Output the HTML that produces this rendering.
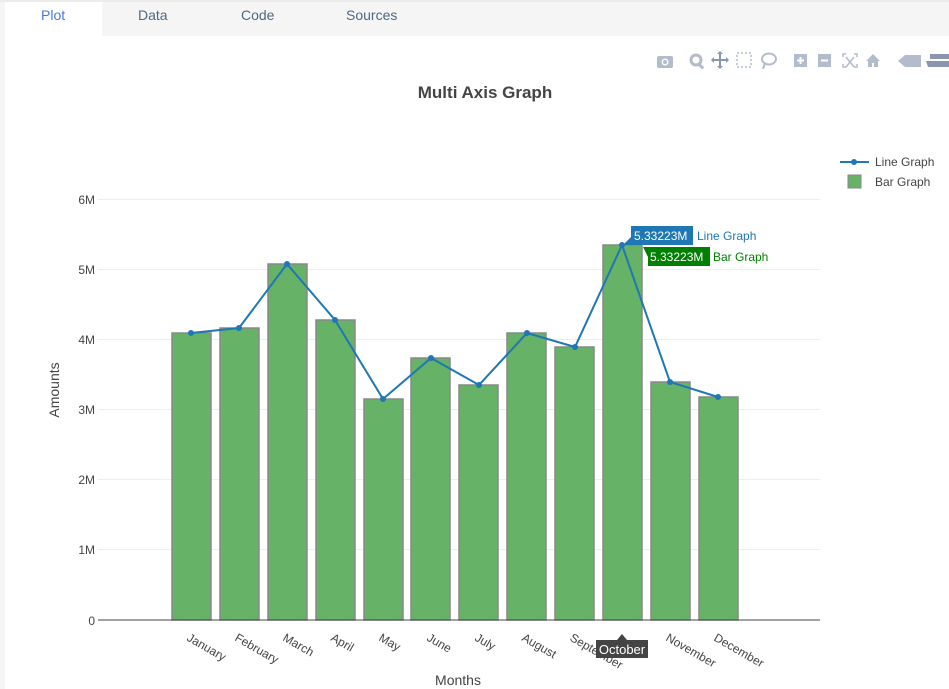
<!DOCTYPE html>
<html><head><meta charset="utf-8"><style>
body{margin:0;width:949px;height:689px;overflow:hidden;background:#fff;font-family:"Liberation Sans",sans-serif}
svg{position:absolute;left:0;top:0}
</style></head><body>
<svg width="949" height="689" viewBox="0 0 949 689" font-family="Liberation Sans, sans-serif">
<rect x="0" y="0" width="949" height="36" fill="#f5f5f5"/>
<rect x="0" y="0" width="5" height="689" fill="#f5f5f5"/>
<rect x="5" y="0" width="97" height="36" fill="#fff"/>
<rect x="0" y="0" width="949" height="2" fill="#ececec"/>
<g font-size="14">
<text x="41" y="20" fill="#447adb">Plot</text>
<text x="138" y="20" fill="#506784">Data</text>
<text x="241" y="20" fill="#506784">Code</text>
<text x="346" y="20" fill="#506784">Sources</text>
</g>
<!-- modebar -->
<g fill="#b3bccd">
<rect x="657" y="56" width="16" height="12" rx="2"/><circle cx="665" cy="62" r="3.5" fill="#fff"/><circle cx="665" cy="62" r="2"/>
<circle cx="696" cy="60" r="5" fill="none" stroke="#b3bccd" stroke-width="3"/><rect x="699" y="63" width="3" height="7" transform="rotate(-45 700 66)"/>
<path d="M720 52v16M712 60h16" stroke="#8a96ad" stroke-width="2"/><path d="M720 51l-3 3h6zM720 69l-3-3h6zM711 60l3-3v6zM729 60l-3-3v6z" fill="#8a96ad"/>
<rect x="737" y="53" width="14" height="14" fill="none" stroke="#b3bccd" stroke-width="1.5" stroke-dasharray="2 2"/>
<ellipse cx="769" cy="59" rx="7" ry="5.5" fill="none" stroke="#b3bccd" stroke-width="2"/><path d="M765 63l-2 6" stroke="#b3bccd" stroke-width="2"/>
<rect x="794" y="54" width="13" height="13"/><path d="M800.5 57v7M797 60.5h7" stroke="#fff" stroke-width="2"/>
<rect x="818" y="54" width="13" height="13"/><path d="M821 60.5h7" stroke="#fff" stroke-width="2"/>
<path d="M843 57v-3h3M854 54h3v3M857 64v3h-3M846 67h-3v-3M846 57l8 10M854 57l-8 10" fill="none" stroke="#b3bccd" stroke-width="1.5"/>
<path d="M866 61l7-7 7 7h-2v6h-4v-4h-2v4h-4v-6z"/>
<path d="M898 61l7-6h16v12h-16z"/>
<path d="M930 54h19v5h-19zM926 61h23v6h-21z" fill="#8a96ad"/>
</g>
<text x="485" y="98" font-size="17" font-weight="bold" fill="#444" text-anchor="middle">Multi Axis Graph</text>
<!-- grid -->
<g stroke="#eee" stroke-width="1">
<line x1="98" x2="820" y1="199.5" y2="199.5"/><line x1="98" x2="820" y1="269.5" y2="269.5"/>
<line x1="98" x2="820" y1="339.5" y2="339.5"/><line x1="98" x2="820" y1="409.5" y2="409.5"/>
<line x1="98" x2="820" y1="479.5" y2="479.5"/><line x1="98" x2="820" y1="549.5" y2="549.5"/>
</g>
<g font-size="12" fill="#444" text-anchor="end">
<text x="95" y="204">6M</text><text x="95" y="274">5M</text><text x="95" y="344">4M</text>
<text x="95" y="414">3M</text><text x="95" y="484">2M</text><text x="95" y="554">1M</text><text x="95" y="625">0</text>
</g>
<text transform="translate(59 390) rotate(-90)" font-size="14" fill="#444" text-anchor="middle">Amounts</text>
<g fill="#66b266" stroke="#888" stroke-width="1.5">
<rect x="172" y="333" width="39" height="287"/>
<rect x="220" y="328" width="39" height="292"/>
<rect x="268" y="264" width="39" height="356"/>
<rect x="316" y="320" width="39" height="300"/>
<rect x="364" y="399" width="39" height="221"/>
<rect x="411" y="358" width="39" height="262"/>
<rect x="459" y="385" width="39" height="235"/>
<rect x="507" y="333" width="39" height="287"/>
<rect x="555" y="347" width="39" height="273"/>
<rect x="603" y="245" width="39" height="375"/>
<rect x="651" y="382" width="39" height="238"/>
<rect x="699" y="397" width="39" height="223"/>
</g>
<line x1="98" x2="820" y1="620" y2="620" stroke="#444" stroke-width="1"/>
<polyline fill="none" stroke="#1f77b4" stroke-width="2" points="191,333 239,328 287,264 335,320 383,399 431,358 479,385 527,333 575,347 622,245 670,382 718,397"/>
<g fill="#1f77b4">
<circle cx="191" cy="333" r="3"/><circle cx="239" cy="328" r="3"/><circle cx="287" cy="264" r="3"/><circle cx="335" cy="320" r="3"/><circle cx="383" cy="399" r="3"/><circle cx="431" cy="358" r="3"/><circle cx="479" cy="385" r="3"/><circle cx="527" cy="333" r="3"/><circle cx="575" cy="347" r="3"/><circle cx="622" cy="245" r="3"/><circle cx="670" cy="382" r="3"/><circle cx="718" cy="397" r="3"/>
</g>
<g font-size="12" fill="#444">
<text transform="translate(186 640) rotate(30)">January</text>
<text transform="translate(234 640) rotate(30)">February</text>
<text transform="translate(282 640) rotate(30)">March</text>
<text transform="translate(330 640) rotate(30)">April</text>
<text transform="translate(378 640) rotate(30)">May</text>
<text transform="translate(426 640) rotate(30)">June</text>
<text transform="translate(474 640) rotate(30)">July</text>
<text transform="translate(521 640) rotate(30)">August</text>
<text transform="translate(569 640) rotate(30)">September</text>
<text transform="translate(665 640) rotate(30)">November</text>
<text transform="translate(713 640) rotate(30)">December</text>
</g>
<path d="M622 634l5 6h21v18h-52v-18h21z" fill="#444"/>
<text x="622" y="654" font-size="13" fill="#fff" text-anchor="middle">October</text>
<text x="458" y="685" font-size="14" fill="#444" text-anchor="middle">Months</text>
<!-- hover labels -->
<path d="M623 245l8-8v-11h62v19h-62z" fill="#1f77b4"/>
<text x="634" y="240" font-size="12" fill="#fff">5.33223M</text>
<text x="697" y="240" font-size="12" fill="#1f77b4">Line Graph</text>
<path d="M643 247l5 0h62v19h-62v-9z" fill="#008000"/>
<text x="650" y="261" font-size="12" fill="#fff">5.33223M</text>
<text x="713" y="261" font-size="12" fill="#008000">Bar Graph</text>
<!-- legend -->
<line x1="840" x2="869" y1="162" y2="162" stroke="#1f77b4" stroke-width="2"/><circle cx="854" cy="162" r="3" fill="#1f77b4"/>
<text x="875" y="166" font-size="12" fill="#444">Line Graph</text>
<rect x="848" y="175" width="13" height="13" fill="#66b266" stroke="#888"/>
<text x="875" y="186" font-size="12" fill="#444">Bar Graph</text>
</svg>
</body></html>
